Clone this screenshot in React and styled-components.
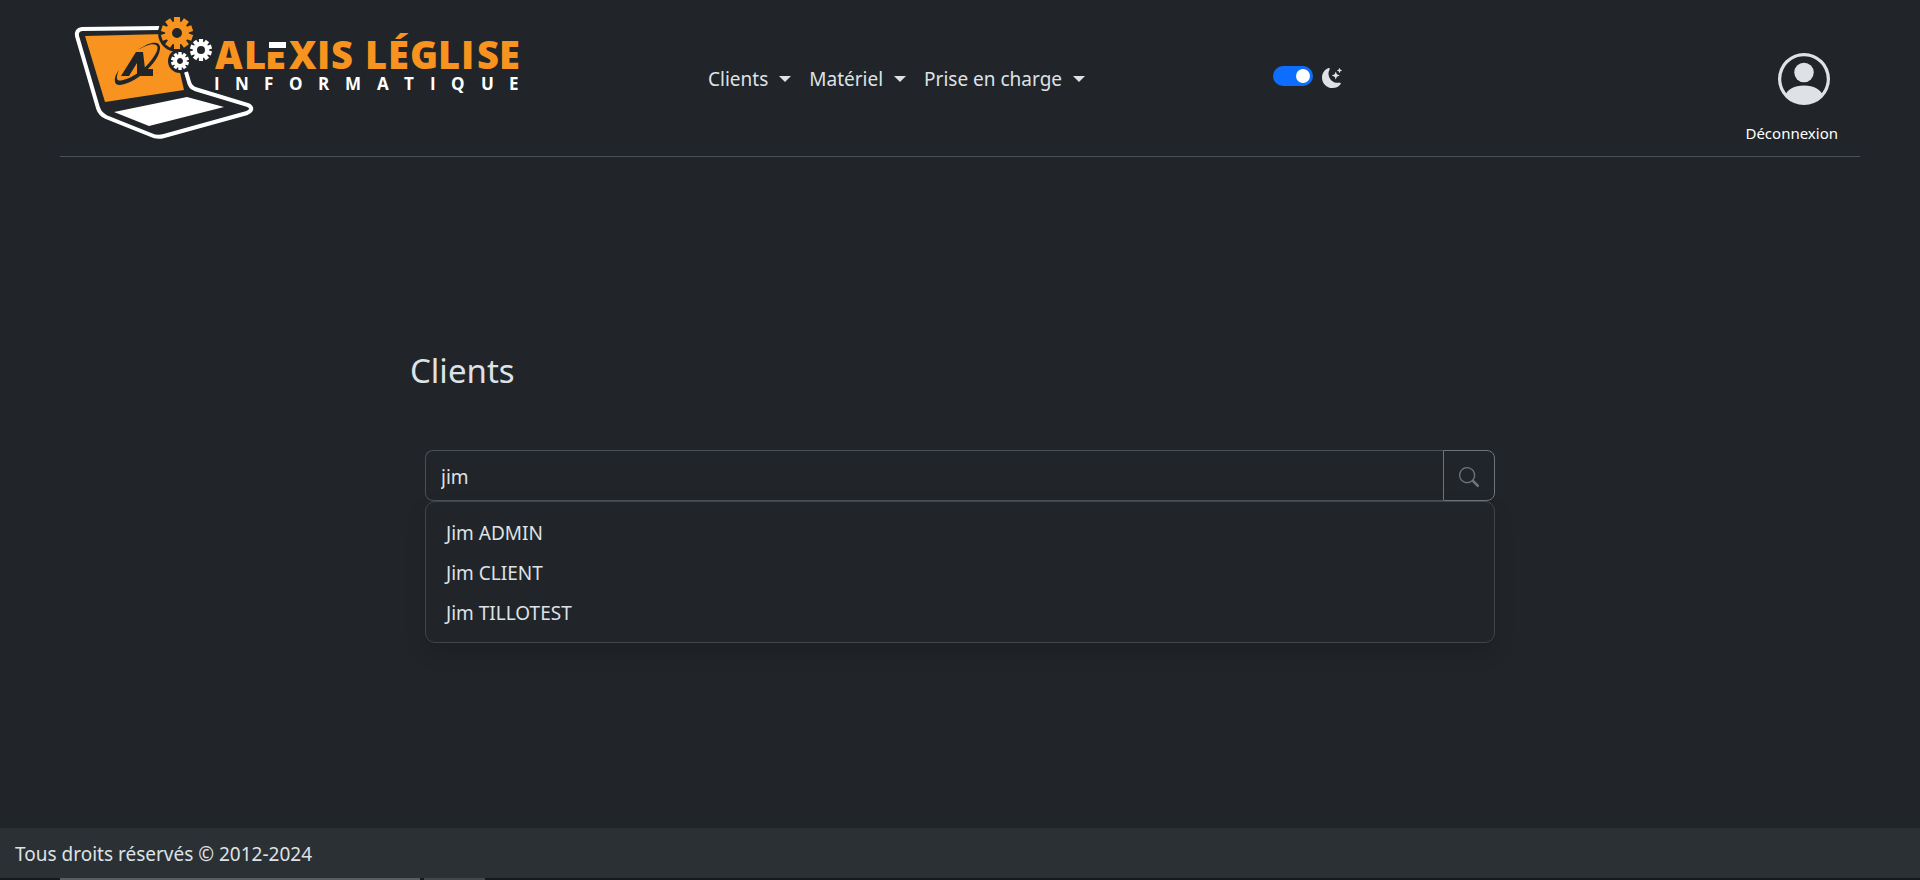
import React, { useState } from 'react'
import styled, { createGlobalStyle } from 'styled-components'
import { BsSearch, BsMoonStarsFill } from 'react-icons/bs'


const clients = ['Jim ADMIN', 'Jim CLIENT', 'Jim TILLOTEST']

const menus = ['Clients', 'Matériel', 'Prise en charge']

const GlobalStyle = createGlobalStyle`
    *, *::before, *::after {
        box-sizing: border-box;
    }

    body {
        margin: 0;
        background: #212529;
        color: #dee2e6;
        font-family: "Noto Sans", "Open Sans", sans-serif;
        font-size: 19px;
        line-height: 30px;
    }

    button, input {
        font: inherit;
        color: inherit;
    }
`

const Page = styled.div`
    display: flex;
    flex-direction: column;
    min-height: 100vh;
`

const Header = styled.header`
    display: grid;
    grid-template-columns: 1fr 1fr 1fr;
    align-items: center;
    height: 157px;
    margin: 0 60px;
    border-bottom: 1px solid #495057;
`

const Brand = styled.a`
    display: block;
    height: 132px;
    padding-left: 12px;
`

const Nav = styled.nav`
    display: flex;
    gap: 18px;
    padding: 2px 0 0 48px;
`

const NavButton = styled.button`
    display: flex;
    align-items: center;
    gap: 11px;
    padding: 0;
    border: 0;
    background: none;
    cursor: pointer;

    &::after {
        content: "";
        border: 6px solid transparent;
        border-top-color: currentColor;
        border-bottom: 0;
    }
`

const Tools = styled.div`
    display: flex;
    align-items: center;
    justify-content: space-between;
    padding: 0 22px 0 13px;
`

const ThemeToggle = styled.label`
    display: flex;
    align-items: center;
    gap: 9px;
`

const Switch = styled.input`
    appearance: none;
    display: flex;
    align-items: center;
    width: 40px;
    height: 20px;
    margin: 0 0 4px;
    padding: 0 3px;
    border-radius: 10px;
    background: #495057;
    cursor: pointer;

    &::before {
        content: "";
        width: 14px;
        height: 14px;
        border-radius: 50%;
        background: #fff;
    }

    &:checked {
        justify-content: flex-end;
        background: #0d6efd;
    }
`

const Account = styled.div`
    display: flex;
    flex-direction: column;
    align-items: flex-end;
    gap: 16px;
    padding-top: 42px;
`

const Avatar = styled.svg`
    display: block;
    width: 52px;
    height: 52px;
    margin-right: 8px;
`

const Logout = styled.a`
    color: #fff;
    font-size: 15px;
    line-height: 24px;
    text-decoration: none;
`

const Main = styled.main`
    flex: 1;
    width: 1100px;
    max-width: 100%;
    margin: 0 auto;
    padding-top: 194px;
`

const Title = styled.h1`
    margin: 0;
    font-size: 33px;
    font-weight: 400;
    line-height: 40px;
`

const Search = styled.form`
    position: relative;
    margin: 59px 15px 0;
`

const SearchBar = styled.div`
    display: flex;
    height: 51px;
`

const SearchInput = styled.input`
    flex: 1;
    min-width: 0;
    padding: 2px 15px 0;
    border: 1px solid #495057;
    border-right: 0;
    border-radius: 8px 0 0 8px;
    background: #212529;
    outline: 0;
`

const SearchButton = styled.button`
    display: flex;
    align-items: center;
    justify-content: center;
    width: 52px;
    padding: 2px 0 0;
    border: 1px solid #6c757d;
    border-radius: 0 8px 8px 0;
    background: none;
    color: #6c757d;
    font-size: 20px;
`

const Results = styled.ul`
    position: absolute;
    top: 100%;
    left: 0;
    right: 0;
    margin: 0;
    padding: 11px 0 9px;
    border: 1px solid #40454a;
    border-radius: 10px;
    background: #212529;
    box-shadow: 0 10px 20px rgba(0, 0, 0, 0.15);
    list-style: none;
`

const Result = styled.a`
    display: block;
    padding: 5px 20px;
    color: inherit;
    text-decoration: none;
`

const Footer = styled.footer`
    padding: 11px 15px 9px;
    background: #2b3035;
`

const BottomEdge = styled.div`
    display: flex;
    gap: 4px;
    height: 2px;
    padding-left: 60px;
    background: #16191c;
`

const EdgeItem = styled.span`
    width: ${({ $wide }) => ($wide ? '360px' : '61px')};
    background: ${({ $wide }) => ($wide ? '#5a5d60' : '#44474a')};
`

const Gear = ({ x, y, r, teeth, hole, color }) => (
    <g transform={`translate(${x} ${y})`} fill={color}>
        {Array.from({ length: teeth }, (_, i) => (
            <rect
                key={i}
                x={-r * 0.19}
                y={-r}
                width={r * 0.38}
                height={r * 0.5}
                transform={`rotate(${(i * 360) / teeth})`}
            />
        ))}
        <circle r={(r * 0.74 + hole) / 2} fill="none" stroke={color} strokeWidth={r * 0.74 - hole} />
    </g>
)

const Logo = () => (
    <svg width="450" height="132" viewBox="72 12 450 132" role="img" aria-label="Alexis Léglise Informatique">
        <path
            d="M160 28 L82 29 Q76 30 77 36 L98 108 Q100 114 106 117 L151 135 Q157 138 164 136 L247 113 Q255 109 248 105 L195 89 Q190 87 189 82 L186 72"
            fill="none"
            stroke="#fff"
            strokeWidth="4"
        />
        <path d="M85 36 L165 34 L176 55 L184 90 L105 102 Z" fill="#f7931e" />
        <path d="M114 112 L187 97 L224 107 L149 126 Z" fill="#fff" />
        <g fill="#212529">
            <path d="M121 76 L136 52 H143 L145 69 H153 V76 H137 V63 L129 76 Z" />
            <path d="M138 50 C150 41 161 40 160 49 C159 58 150 68 140 76 C129 84 116 88 115 82 C114 78 116 74 119 70 C115 79 117 82 123 80 C132 78 142 71 149 63 C156 55 160 47 156 45 C152 43 145 46 138 50 Z" />
            <circle cx="177" cy="33" r="19" />
            <circle cx="180" cy="61" r="12" />
        </g>
        <Gear x={177} y={33} r={16} teeth={10} hole={5} color="#f7931e" />
        <Gear x={201} y={50} r={11} teeth={10} hole={4} color="#fff" />
        <Gear x={180} y={61} r={9} teeth={10} hole={3} color="#fff" />
        <g fontFamily='"Open Sans", sans-serif' fontWeight="800" fontSize="38" fill="#f7931e">
            <text x="215 244 265 289 317 331" y="69">ALEXIS</text>
            <text x="365 388 410 438 461 477 499" y="69">LÉGLISE</text>
        </g>
        <path d="M267 40 H288 V52 H267 Z" fill="#212529" />
        <path d="M269 42 H286 V48 H269 Z" fill="#fff" />
        <text
            x="214 235 264 289 318 345 377 404 430 451 481 509"
            y="90"
            fontFamily='"Open Sans", sans-serif'
            fontWeight="700"
            fontSize="17"
            fill="#fff"
        >
            INFORMATIQUE
        </text>
    </svg>
)

const App = () => {
    const [dark, setDark] = useState(true)
    const [query, setQuery] = useState('jim')

    return (
        <>
            <GlobalStyle />
            <Page>
                <Header>
                    <Brand href="#">
                        <Logo />
                    </Brand>
                    <Nav>
                        {menus.map((menu) => (
                            <NavButton key={menu} type="button">{menu}</NavButton>
                        ))}
                    </Nav>
                    <Tools>
                        <ThemeToggle>
                            <Switch
                                type="checkbox"
                                role="switch"
                                aria-label="Mode sombre"
                                checked={dark}
                                onChange={(e) => setDark(e.target.checked)}
                            />
                            <BsMoonStarsFill size={20} />
                        </ThemeToggle>
                        <Account>
                            <Avatar viewBox="0 0 16 16" fill="currentColor">
                                <path d="M11 6a3 3 0 1 1-6 0 3 3 0 0 1 6 0" />
                                <path fillRule="evenodd" d="M0 8a8 8 0 1 1 16 0A8 8 0 0 1 0 8m8-7a7 7 0 0 0-5.468 11.37C3.242 11.226 4.805 10 8 10s4.757 1.225 5.468 2.37A7 7 0 0 0 8 1" />
                            </Avatar>
                            <Logout href="#">Déconnexion</Logout>
                        </Account>
                    </Tools>
                </Header>
                <Main>
                    <Title>Clients</Title>
                    <Search onSubmit={(e) => e.preventDefault()}>
                        <SearchBar>
                            <SearchInput
                                type="text"
                                aria-label="Rechercher un client"
                                value={query}
                                onChange={(e) => setQuery(e.target.value)}
                            />
                            <SearchButton type="submit" aria-label="Rechercher">
                                <BsSearch />
                            </SearchButton>
                        </SearchBar>
                        <Results>
                            {clients.map((client) => (
                                <li key={client}>
                                    <Result href="#">{client}</Result>
                                </li>
                            ))}
                        </Results>
                    </Search>
                </Main>
                <Footer>Tous droits réservés © 2012-2024</Footer>
                <BottomEdge>
                    <EdgeItem $wide />
                    <EdgeItem />
                </BottomEdge>
            </Page>
        </>
    )
}

export default App
